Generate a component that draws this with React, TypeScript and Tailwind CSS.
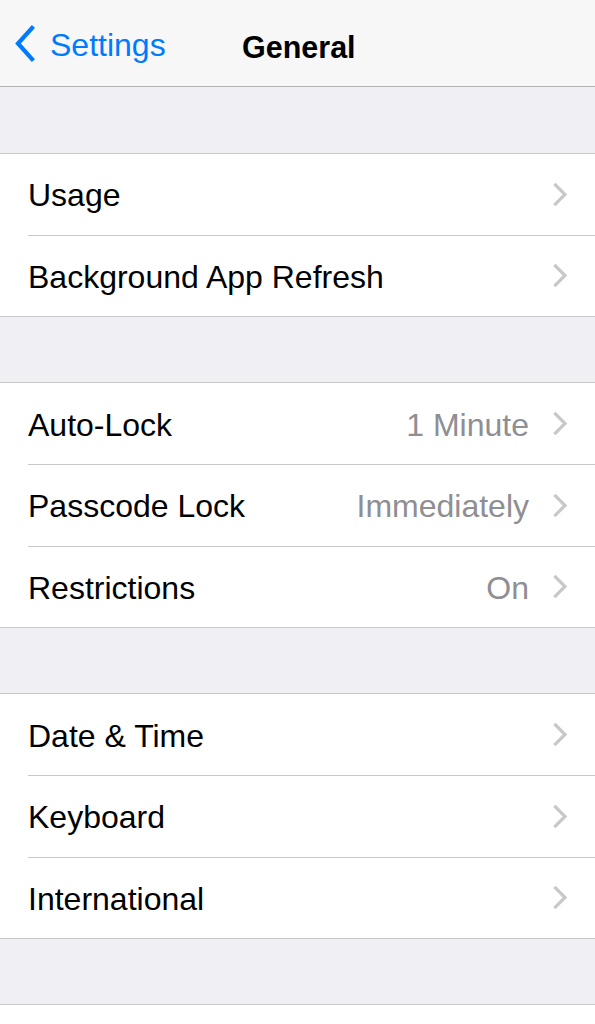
import React from "react";

const font = { fontFamily: '"Liberation Sans", Arial, sans-serif' };

function Chevron() {
  return (
    <svg width="15" height="23" viewBox="0 0 15 23" className="shrink-0">
      <path d="M2.5 2 L12 11.5 L2.5 21" fill="none" stroke="#c7c7cc" strokeWidth="3.2" strokeLinecap="square" />
    </svg>
  );
}

type Row = { label: string; value?: string };

function Group({ rows }: { rows: Row[] }) {
  return (
    <div className="bg-white border-y border-[#c8c7cc]">
      {rows.map((r, i) => (
        <div key={r.label} className="flex pl-[28px]">
          <div
            className={`flex-1 flex items-center h-[80.67px] pr-[27px] ${
              i < rows.length - 1 ? "border-b border-[#c8c7cc] box-content" : ""
            }`}
          >
            <span className="flex-1 text-[32px] text-black translate-y-[1px]">{r.label}</span>
            {r.value && (
              <span className="text-[32px] text-[#8e8e93] mr-[24px] translate-y-[1px]">{r.value}</span>
            )}
            <Chevron />
          </div>
        </div>
      ))}
    </div>
  );
}

export default function App() {
  return (
    <div className="w-[595px] h-[1024px] overflow-hidden bg-[#efeff4]" style={font}>
      <div className="relative h-[87px] bg-[#f7f7f7] border-b border-[#b2b2b2] flex items-center">
        <div className="flex items-center pl-[14px] pt-[2px]">
          <svg width="22" height="38" viewBox="0 0 22 38">
            <path d="M18 3 L4 18.5 L18 34" fill="none" stroke="#007aff" strokeWidth="4.2" strokeLinecap="square" />
          </svg>
          <span className="ml-[14px] text-[32px] text-[#007aff] pt-[2px]">Settings</span>
        </div>
        <span className="absolute left-[242px] top-[25px] text-[30.5px] font-bold text-black">General</span>
      </div>
      <div className="h-[66px]" />
      <Group rows={[{ label: "Usage" }, { label: "Background App Refresh" }]} />
      <div className="h-[65px]" />
      <Group
        rows={[
          { label: "Auto-Lock", value: "1 Minute" },
          { label: "Passcode Lock", value: "Immediately" },
          { label: "Restrictions", value: "On" },
        ]}
      />
      <div className="h-[65px]" />
      <Group rows={[{ label: "Date & Time" }, { label: "Keyboard" }, { label: "International" }]} />
      <div className="h-[65px]" />
      <div className="bg-white border-t border-[#c8c7cc] h-[200px]" />
    </div>
  );
}
